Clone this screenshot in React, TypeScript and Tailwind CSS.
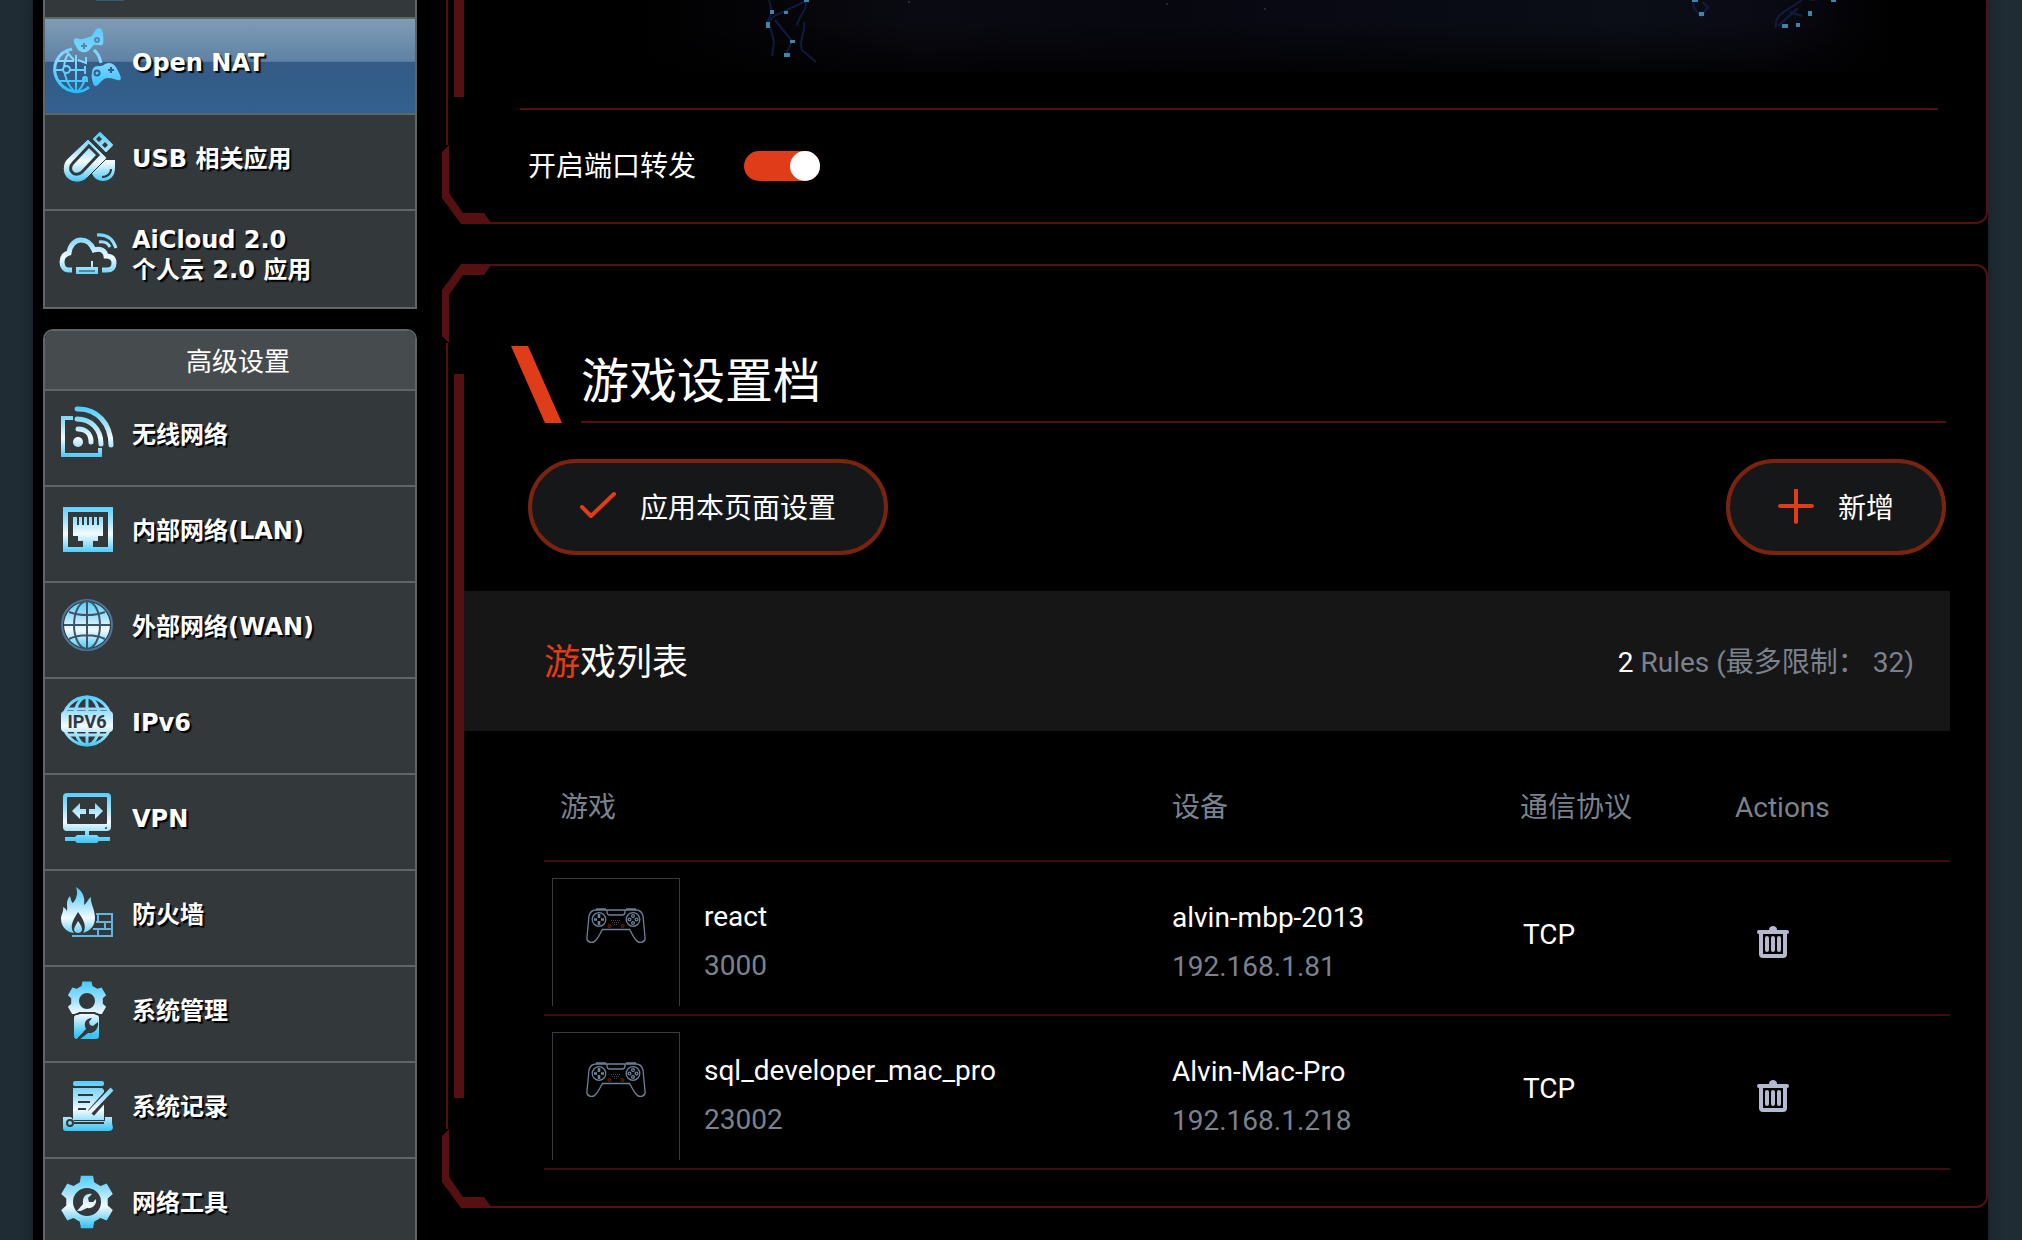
import React, { useState } from 'react';
import clsx from 'clsx';

const ICE = 'url(#ice)';
const DARK = '#33383a';

function gearPath(cx: number, cy: number, outer: number, body: number, hole: number) {
  const pt = (r: number, deg: number) => {
    const a = (deg * Math.PI) / 180;
    return `${(cx + r * Math.cos(a)).toFixed(1)} ${(cy + r * Math.sin(a)).toFixed(1)}`;
  };
  const points: string[] = [];
  for (let i = 0; i < 6; i++) {
    const a = i * 60 - 90;
    points.push(pt(body, a - 20), pt(outer, a - 13), pt(outer, a + 13), pt(body, a + 20));
  }
  return `M${points.join('L')}ZM${cx - hole} ${cy}a${hole} ${hole} 0 1 0 ${hole * 2} 0a${hole} ${hole} 0 1 0 ${-hole * 2} 0Z`;
}

function MenuIcon({ children }: { children?: React.ReactNode }) {
  return (
    <svg viewBox="0 0 87 94" className="h-[94px] w-[87px] shrink-0" fill="none" aria-hidden="true">
      {children}
    </svg>
  );
}

const OpenNatIcon = () => (
  <MenuIcon>
    <g stroke="url(#sky)" strokeWidth="2">
      <path d="M27 30C12 33 6 48 12 60S34 77 44 68" strokeWidth="3" />
      <path d="M31 36v36M12 42h17M10 51h30M13 62h30M24 34C17 42 17 60 29 72M33 72c5-5 7-10 7-15M21 32l8 9M33 41l8 3v-6M40 47v8" />
      <circle cx="21.500" cy="50.500" r="3.500" fill="#335e8a" />
      <path d="M49 31C53 34 55 39 56 44" strokeWidth="3" />
      <circle cx="40" cy="60" r="2" />
    </g>
    <g fill="url(#sky)">
      <path d="M29 20C32 18 35 21 38 20L47 17C49 14 50 9 55 9C58 10 59 18 58 25C56 28 52 25 49 26C46 28 45 32 41 33C38 34 34 33 32 29C30 26 28 22 29 20Z" />
      <path d="M47 54C47 50 49 47 53 47C58 48 60 44 64 44C68 44 71 47 73 52C75 55 77 60 75 61C72 62 68 59 63 59C58 59 56 63 53 66C51 68 48 67 48 64C47 61 46 57 47 54Z" />
    </g>
    <g stroke="#5d83a8" strokeWidth="2">
      <path d="M39 24v6M36 27h6" />
      <circle cx="52" cy="21" r="2" />
    </g>
    <g stroke="#335e8a" strokeWidth="2">
      <path d="M66 48v6M63 51h6" />
      <circle cx="52" cy="54" r="2.500" />
    </g>
  </MenuIcon>
);

const UsbIcon = () => (
  <MenuIcon>
    <path d="M50 45H70V53C70 61 65 66 58 66C52 66 48 62 47 58Z" fill={ICE} />
    <path d="M66 54C66 59 62 62 57 62" stroke={DARK} strokeWidth="2" />
    <path d="M43 24L60 41C62 43 62 43 60 45L42 63C36 69 27 68 22 63C17 58 17 49 22 44Z" fill={ICE} stroke={DARK} strokeWidth="1" />
    <path d="M44 31L53 40L37 57C34 60 29 60 27 57C25 55 25 51 28 48Z" fill={ICE} stroke={DARK} strokeWidth="3" />
    <path d="M55 18L67 30L61 36L49 24Z" fill={ICE} stroke={ICE} strokeWidth="2" strokeLinejoin="round" />
    <path d="M54 21l3 3-3 3-3-3ZM60 27l3 3-3 3-3-3Z" fill={DARK} />
  </MenuIcon>
);

const CloudIcon = () => (
  <MenuIcon>
    <g stroke={ICE} strokeWidth="5">
      <path d="M27 59H24C19 59 17 55 17 51C17 46 20 43 24 42C25 34 30 29 36 29C42 29 46 32 49 39C55 37 60 39 61 45C67 45 69 48 69 52C69 57 66 59 62 59H57" />
      <path d="M52 24C62 23 68 28 71 37M54 31C60 30 63 32 65 36" strokeWidth="3" />
    </g>
    <path d="M31 56H46V50H48V56H53V63H31Z" fill={ICE} />
    <path d="M34 60h16" stroke={DARK} />
  </MenuIcon>
);

const WirelessIcon = () => (
  <MenuIcon>
    <g stroke={ICE} strokeWidth="4">
      <path d="M28 27H18V64H55V57" />
      <path d="M32 18C52 17 66 33 66 54M32 28C46 28 56 38 56 53M33 38C41 38 46 43 46 51" strokeWidth="5" strokeLinecap="round" />
    </g>
    <circle cx="33" cy="51" r="5" fill={ICE} />
  </MenuIcon>
);

const LanIcon = () => (
  <MenuIcon>
    <path d="M18 20H68V65H18Z" fill={ICE} />
    <path d="M23 25H63V60H23Z" fill={DARK} />
    <path d="M28 30H58V49H53V54H48V61H38V54H33V49H28Z" fill={ICE} />
    <path d="M33 29v9M38 29v9M43 29v9M48 29v9M53 29v9" stroke={DARK} strokeWidth="2" />
  </MenuIcon>
);

const WanIcon = () => (
  <MenuIcon>
    <circle cx="42" cy="42" r="25" stroke="#4c7699" strokeWidth="2" />
    <circle cx="42" cy="42" r="23" fill={ICE} />
    <g stroke="#3f5565" strokeWidth="2">
      <path d="M42 18v48M19 42h46M24 29C34 33 50 33 60 29M24 56C34 51 50 51 60 56" />
      <ellipse cx="42" cy="42" rx="13" ry="24" />
    </g>
  </MenuIcon>
);

const Ipv6Icon = () => (
  <MenuIcon>
    <g stroke={ICE} strokeWidth="3">
      <circle cx="42" cy="42" r="24" />
      <ellipse cx="42" cy="42" rx="13" ry="24" />
      <path d="M42 18v48M22 30h40M22 56h40" />
    </g>
    <rect x="16" y="32" width="52" height="21" rx="4" fill={ICE} />
    <text x="42" y="49" textAnchor="middle" fontSize="18" fill={DARK} className="font-['Roboto',sans-serif] font-bold [text-shadow:none]">
      IPV6
    </text>
  </MenuIcon>
);

const VpnIcon = () => (
  <MenuIcon>
    <path d="M22 18H62Q66 18 66 22V52Q66 56 62 56H44V60H52L54 62H65V66H54L52 68H32L30 66H20V62H30L32 60H40V56H22Q18 56 18 52V22Q18 18 22 18Z" fill={ICE} />
    <rect x="22" y="22" width="40" height="27" rx="1" fill={DARK} />
    <path d="M27 36L35 28V34H41V39H35V44ZM58 36L50 28V34H44V39H50V44Z" fill={ICE} />
    <circle cx="61" cy="53" r="1" fill={DARK} />
  </MenuIcon>
);

const FirewallIcon = () => (
  <MenuIcon>
    <path d="M27 65H67V43H51M51 51H67M48 58H67M53 43v8M60 51v7M53 58v7" stroke="#62b5dd" strokeWidth="2" />
    <path
      d="M31 16C39 21 40 28 39 34C42 32 43 28 46 26C45 32 50 38 50 47C50 55 45 60 38 62C42 56 39 49 33 41C28 49 24 56 29 62C21 61 16 55 16 48C16 43 19 41 18 36C21 38 22 39 22 41C23 34 20 31 25 25C26 28 26 31 28 32C32 27 33 22 31 16Z"
      fill={ICE}
    />
    <path d="M33 50C36 54 37 56 37 59C36 63 30 63 29 59C29 56 31 54 33 50Z" fill={ICE} />
  </MenuIcon>
);

const AdminIcon = () => (
  <MenuIcon>
    <path d={gearPath(42, 34, 20, 16, 8)} fill={ICE} fillRule="evenodd" />
    <path d="M26 50L34 45H50L58 50V47H26Z" fill={DARK} />
    <rect x="29" y="48" width="25" height="24" rx="3" fill={ICE} />
    <path d="M30 73L41 62C38 56 41 51 47 51L44 55L45 58L48 59L53 55C54 62 49 67 43 66L34 73Z" fill={DARK} />
    <path d="M31 72L38 65" stroke={ICE} strokeWidth="1" />
  </MenuIcon>
);

const LogIcon = () => (
  <MenuIcon>
    <rect x="28" y="18" width="31" height="5" rx="2" fill={ICE} />
    <path d="M28 25H57L59 27V57H28ZM18 54H26L29 58H60V54H67V60L68 65Q67 68 64 68H21Q18 68 18 65Z" fill={ICE} />
    <path d="M33 32H48M33 39H45M33 46H41M29 60H59" stroke={DARK} strokeWidth="2" />
    <path d="M68 25L46 50" stroke={DARK} strokeWidth="8" />
    <path d="M67 26L47 47L43 51" stroke={ICE} strokeWidth="4" />
    <circle cx="25" cy="60" r="3" stroke={DARK} strokeWidth="2" />
  </MenuIcon>
);

const ToolsIcon = () => (
  <MenuIcon>
    <path d={gearPath(42, 43, 27, 21, 14)} fill={ICE} fillRule="evenodd" />
    <path d="M32 52L38 45C37 38 41 34 47 35L43 39L44 43L48 43L51 40C52 46 47 50 42 49L36 52Z" fill={ICE} />
  </MenuIcon>
);

type Item = { lines: string[]; Icon: React.ComponentType };

const generalItems: Item[] = [
  { lines: ['Open NAT'], Icon: OpenNatIcon },
  { lines: ['USB 相关应用'], Icon: UsbIcon },
  { lines: ['AiCloud 2.0', '个人云 2.0 应用'], Icon: CloudIcon },
];

const advancedItems: Item[] = [
  { lines: ['无线网络'], Icon: WirelessIcon },
  { lines: ['内部网络(LAN)'], Icon: LanIcon },
  { lines: ['外部网络(WAN)'], Icon: WanIcon },
  { lines: ['IPv6'], Icon: Ipv6Icon },
  { lines: ['VPN'], Icon: VpnIcon },
  { lines: ['防火墙'], Icon: FirewallIcon },
  { lines: ['系统管理'], Icon: AdminIcon },
  { lines: ['系统记录'], Icon: LogIcon },
  { lines: ['网络工具'], Icon: ToolsIcon },
];

const rules = [
  { name: 'react', port: '3000', device: 'alvin-mbp-2013', ip: '192.168.1.81', protocol: 'TCP' },
  { name: 'sql_developer_mac_pro', port: '23002', device: 'Alvin-Mac-Pro', ip: '192.168.1.218', protocol: 'TCP' },
];

function MenuList({ items, active }: { items: Item[]; active?: string }) {
  return (
    <ul className="divide-y-2 divide-[#5f6666]">
      {items.map(({ lines, Icon }) => (
        <li key={lines[0]}>
          <a
            href="#"
            className={clsx(
              'flex h-[94px] items-center text-2xl leading-[30px] font-bold [text-shadow:2px_2px_1px_#000]',
              lines[0] === active
                ? 'bg-[linear-gradient(to_bottom,#7f9cb5_0%,#5f82a4_45%,#335b85_46%,#33608f_100%)]'
                : 'bg-[#33383a]',
            )}
          >
            <Icon />
            <span className="pb-[6px]">
              {lines.map((line) => (
                <span key={line} className="block">
                  {line}
                </span>
              ))}
            </span>
          </a>
        </li>
      ))}
    </ul>
  );
}

function Sidebar() {
  return (
    <nav className="w-[374px] shrink-0 font-['DejaVu_Sans','Noto_Sans_CJK_SC',sans-serif] text-white">
      <div className="border-x-2 border-b-2 border-[#5f6666] bg-[#33383a] pb-[2px]">
        <div className="h-[17px]">
          <div className="ml-[51px] h-px w-7 bg-[#2f5f78]" />
        </div>
        <div className="border-t-2 border-[#5f6666]">
          <MenuList items={generalItems} active="Open NAT" />
        </div>
      </div>
      <div className="mt-5 overflow-hidden rounded-t-[10px] border-2 border-[#5f6666]">
        <h2 className="flex h-[60px] items-center justify-center border-b-2 border-[#5f6666] bg-[#464c4e] pt-1 pl-4 text-[26px]">
          高级设置
        </h2>
        <MenuList items={advancedItems} />
      </div>
    </nav>
  );
}

// Angled bracket that sits over the two left corners of a panel
function Corner({ className }: { className: string }) {
  return (
    <svg viewBox="0 0 50 79" className={clsx('absolute -left-[6px] h-[79px] w-[50px]', className)} aria-hidden="true">
      <path d="M0 0H22L8 24V79H0Z" fill="#000" />
      <path d="M19 0H50L42 11H21L7 31V79L0 72V26Z" fill="#551112" />
    </svg>
  );
}

function Banner() {
  return (
    <svg viewBox="0 0 1418 72" className="block w-full" aria-hidden="true">
      <defs>
        <linearGradient id="haze">
          <stop offset="0.080" stopColor="#000" />
          <stop offset="0.280" stopColor="#0a0a12" />
          <stop offset="0.450" stopColor="#070710" />
          <stop offset="0.780" stopColor="#0b0e17" />
          <stop offset="0.880" stopColor="#0a0a14" />
          <stop offset="0.970" stopColor="#000" />
        </linearGradient>
        <linearGradient id="fade" x2="0" y2="1">
          <stop offset="0.300" stopColor="#000" stopOpacity="0" />
          <stop offset="1" stopColor="#000" stopOpacity="0.700" />
        </linearGradient>
      </defs>
      <rect width="1418" height="72" fill="url(#haze)" />
      <rect width="1418" height="72" fill="url(#fade)" />
      <g stroke="#152250" strokeWidth="2" fill="none" opacity="0.750">
        <path d="M249 0l3 12-6 13 8-9L286 1M255 20l17 21-6 14M286 2c2 8-8 14-9 24M284 22c2 12-6 18-2 28l14 12M250 26l4 16-2 14" />
        <path d="M1173 0l1 8 8 10M1182 2l6 5-6 8" />
        <path d="M1256 28c-2-12 8-16 14-20l12-8M1258 26l20-18M1270 12l12 4M1290 0l20-2" />
      </g>
      <g fill="#3e86a8">
        <path d="M284 0h5v2h-5zM250 10h4v4h-4zM264 11h4v3h-4zM246 22h4v6h-4zM270 40h5v3h-5zM264 53h6v4h-6z" />
        <path d="M1172 0h6v2h-6zM1179 12h5v4h-5zM1262 24h6v4h-6zM1276 23h4v4h-4zM1288 11h4v5h-4zM1311 0h5v2h-5z" />
        <path d="M388 1h2v2h-2zM646 3h2v2h-2zM744 8h2v2h-2z" opacity="0.300" />
      </g>
    </svg>
  );
}

function Gamepad() {
  return (
    <svg viewBox="0 0 60 36" className="h-9 w-[60px]" fill="none" stroke="#6c8299" strokeWidth="1.300" aria-hidden="true">
      <path d="M10 2H50C54 2 56 4 57 8L59 29C60 35 53 36 50 32C47 29 46 25 43.500 21.500H16.500C14 25 13 29 10 32C7 36 0 35 1 29L3 8C4 4 6 2 10 2Z" />
      <path d="M10 1h10M40 1h10M21 2v2c0 2 1 3 3 3h12c2 0 3-1 3-3V2" />
      <circle cx="13" cy="11.500" r="6.800" />
      <circle cx="47" cy="11.500" r="6.800" />
      <path d="M13 6v4M13 13v4M8 11.500h3M15 11.500h3" strokeWidth="2.600" />
      <circle cx="47" cy="8" r="1.400" />
      <circle cx="47" cy="15" r="1.400" />
      <circle cx="43.500" cy="11.500" r="1.400" />
      <circle cx="50.500" cy="11.500" r="1.400" />
      <path d="M25 12.500h10M26 14.500h8M28 16.500h4" stroke="#454c58" strokeDasharray="1 1" strokeWidth="1" />
      <g stroke="#5a1a10">
        <circle cx="23.500" cy="18" r="1.400" />
        <circle cx="36.500" cy="18" r="1.400" />
      </g>
    </svg>
  );
}

function TrashIcon() {
  return (
    <svg viewBox="0 0 32 32" className="size-8" fill="none" stroke="#b3bacd" aria-hidden="true">
      <path d="M12 4C12 1 14 0 16 0S20 1 20 4Z" fill="#b3bacd" stroke="none" />
      <path d="M2 6H30" strokeWidth="4" strokeLinecap="round" />
      <path d="M4 6V28Q4 30 6 30H26Q28 30 28 28V6" strokeWidth="4" />
      <path d="M10 12V24M16 12V24M22 12V24" strokeWidth="4" strokeLinecap="round" />
    </svg>
  );
}

const pill =
  'flex h-24 items-center gap-6 rounded-full border-4 border-[#7a240f] bg-[#161719] px-12 text-[28px] text-white';

function ForwardingPanel() {
  const [enabled, setEnabled] = useState(true);
  return (
    <section className="relative rounded-br-xl border-2 border-t-0 border-[#551112] pr-12 pl-[72px]">
      <Corner className="-bottom-[2px] -scale-y-100" />
      <div className="absolute top-0 left-[6px] h-[97px] w-[10px] bg-[#551112]" />
      <Banner />
      <div className="mt-9 flex h-[114px] items-center gap-12 border-t-2 border-[#551112] pl-2">
        <label htmlFor="forwarding" className="pt-[2px] text-[28px]">
          开启端口转发
        </label>
        <input
          id="forwarding"
          type="checkbox"
          role="switch"
          checked={enabled}
          onChange={(e) => setEnabled(e.target.checked)}
          className="h-[30px] w-[76px] appearance-none rounded-full bg-gray-600 before:block before:size-[30px] before:rounded-full before:bg-white checked:bg-[#e03c1a] checked:before:ml-[46px]"
        />
      </div>
    </section>
  );
}

function ProfilePanel() {
  return (
    <section className="relative mt-10 rounded-r-xl border-2 border-[#551112] pt-20 pr-9 pb-9 pl-4">
      <Corner className="-top-[2px]" />
      <Corner className="-bottom-[2px] -scale-y-100" />
      <div className="absolute top-[108px] bottom-[108px] left-[6px] w-[10px] bg-[#551112]" />

      <div className="mr-1 ml-[47px] flex gap-[19px]">
        <svg viewBox="0 0 51 77" className="h-[77px] w-[51px] shrink-0" aria-hidden="true">
          <path d="M0 0H17L51 77H34Z" fill="#e03c1a" />
        </svg>
        <h1 className="flex flex-1 items-center border-b-2 border-[#551112] pb-1 text-5xl leading-none">游戏设置档</h1>
      </div>

      <div className="mt-9 mr-1 ml-16 flex justify-between">
        <button type="button" className={pill}>
          <svg viewBox="0 0 36 36" className="size-9" fill="none" stroke="#e03c1a" strokeWidth="4" aria-hidden="true">
            <path d="M2 18L11 27L34 5" strokeLinecap="round" strokeLinejoin="round" />
          </svg>
          <span className="pt-1">应用本页面设置</span>
        </button>
        <button type="button" className={pill}>
          <svg viewBox="0 0 36 36" className="size-9" fill="none" stroke="#e03c1a" strokeWidth="4" aria-hidden="true">
            <path d="M18 1V33M2 17H34" strokeLinecap="round" />
          </svg>
          <span className="pt-1">新增</span>
        </button>
      </div>

      <div className="mt-9 flex h-[140px] items-center justify-between bg-[#161616] pt-1 pr-9 pl-20">
        <h2 className="text-4xl">
          <span className="text-[#e03c1a]">游</span>戏列表
        </h2>
        <p className="text-[28px] text-[#7b828e]">
          <span className="text-white">2</span> Rules (最多限制： 32)
        </p>
      </div>

      <div className="pl-20">
        <table className="w-full table-fixed border-collapse text-left text-[28px] text-[#7b828e]">
          <colgroup>
            <col />
            <col className="w-[348px]" />
            <col className="w-[213px]" />
            <col className="w-[217px]" />
          </colgroup>
          <thead>
            <tr className="h-[130px] border-b-2 border-[#3b0d0e]">
              <th className="pt-6 pl-4 font-normal">游戏</th>
              <th className="pt-6 font-normal">设备</th>
              <th className="pt-6 font-normal">通信协议</th>
              <th className="pt-6 pl-[2px] font-normal">Actions</th>
            </tr>
          </thead>
          <tbody>
            {rules.map((rule) => (
              <tr key={rule.name} className="h-[154px] border-b-2 border-[#3b0d0e]">
                <td className="p-0">
                  <div className="flex pt-4 pb-2 pl-2">
                    <div className="flex h-32 w-32 shrink-0 justify-center border border-b-0 border-[#3a3b40] pt-[29px]">
                      <Gamepad />
                    </div>
                    <div className="pt-[14px] pl-6 leading-[49px]">
                      <div className="text-white">{rule.name}</div>
                      <div>{rule.port}</div>
                    </div>
                  </div>
                </td>
                <td className="p-0 pt-2 leading-[49px]">
                  <div className="text-white">{rule.device}</div>
                  <div>{rule.ip}</div>
                </td>
                <td className="p-0 pb-[6px] pl-[3px] text-white">{rule.protocol}</td>
                <td className="p-0 pt-2 pl-6">
                  <button type="button" aria-label={`Delete ${rule.name}`} className="block">
                    <TrashIcon />
                  </button>
                </td>
              </tr>
            ))}
          </tbody>
        </table>
      </div>
    </section>
  );
}

export default function App() {
  return (
    <div className="h-screen overflow-hidden bg-[#1f2c34] pr-[34px] pl-[33px]">
      <svg className="absolute size-0" aria-hidden="true">
        <defs>
          <linearGradient id="ice" gradientUnits="userSpaceOnUse" x1="0" y1="15" x2="0" y2="68">
            <stop offset="0" stopColor="#46cbff" />
            <stop offset="0.350" stopColor="#a3e2fb" />
            <stop offset="0.600" stopColor="#f3fbff" />
            <stop offset="1" stopColor="#38c4f5" />
          </linearGradient>
          <linearGradient id="sky" gradientUnits="userSpaceOnUse" x1="0" y1="9" x2="0" y2="74">
            <stop offset="0" stopColor="#5cccff" />
            <stop offset="0.500" stopColor="#86d9ff" />
            <stop offset="1" stopColor="#22bdfc" />
          </linearGradient>
        </defs>
      </svg>
      <div className="flex min-h-full items-start bg-black pl-[10px] shadow-[0_0_10px_#1a1a22]">
        <Sidebar />
        <main className="ml-[29px] min-w-0 flex-1 font-['Roboto','Noto_Sans_CJK_SC',sans-serif] text-white">
          <ForwardingPanel />
          <ProfilePanel />
        </main>
      </div>
    </div>
  );
}
